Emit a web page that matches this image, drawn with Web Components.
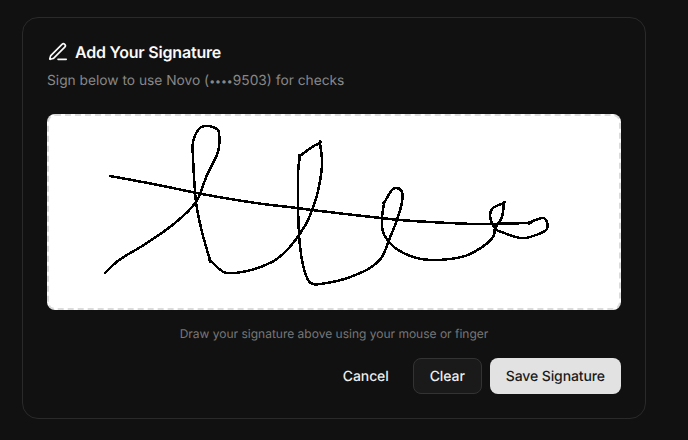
<!DOCTYPE html>
<html>
<head>
<meta charset="utf-8">
<style>
  html, body { margin: 0; padding: 0; background: #111; }
  .dots { font-size: 10.5px; }
</style>
</head>
<body>
<signature-dialog>
  <span slot="title">Add Your Signature</span>
  <span slot="subtitle">Sign below to use Novo (<span class="dots">••••</span>9503) for checks</span>
  <signature-pad></signature-pad>
  <span slot="hint">Draw your signature above using your mouse or finger</span>
  <app-button slot="actions" variant="ghost">Cancel</app-button>
  <app-button slot="actions" variant="outline">Clear</app-button>
  <app-button slot="actions" variant="primary">Save Signature</app-button>
</signature-dialog>
<script>
class AppButton extends HTMLElement {
  constructor() {
    super();
    this.attachShadow({ mode: "open" });
    this.shadowRoot.innerHTML = `
      <style>
        :host { display: inline-flex; }
        button {
          height: 36px;
          padding: 0 16px;
          box-sizing: border-box;
          border-radius: 8px;
          border: 0;
          background: transparent;
          color: #ededed;
          font: 500 14px "Inter", sans-serif;
          letter-spacing: -0.1px;
          text-rendering: geometricPrecision;
          cursor: pointer;
        }
        :host([variant="outline"]) button { background: #1a1a1a; border: 1px solid #333; }
        :host([variant="primary"]) button { background: #e2e2e2; color: #1a1a1a; }
      </style>
      <button><slot></slot></button>`;
  }
}

// a point listed twice stays a sharp corner
const SIGN_POINTS = [
  [105,273],[112,266],[122,258],[147,243],[175,223],[196,202],[207,175],[218,152],[219,133],[215,128],[205,126],[198,130],[193,142],[193,158],[196,202],
  [202,232],[210,260],[210,260],[218,268],[227,273],[247,271],[272,262],[287,250],[299,235],[308,220],[317,195],[322,165],[320,143],[320,143],[312,147],[300,156],[300,156],[298,175],[299,235],
  [303,265],[308,280],[313,284],[320,284],[337,281],[353,276],[370,268],[382,257],[389,240],[397,220],[402,202],[402,192],[397,188],[392,190],[384,203],[384,203],[382,218],[383,232],[389,242],
  [398,250],[413,257],[430,260],[450,259],[468,255],[485,245],[493,237],[496,227],[502,217],[504,203],[504,203],[493,208],[490,215],[492,223],[496,230],[496,230],
  [520,238],[533,236],[546,230],[547,222],[542,218],[528,223],[528,223],[477,224],[430,222],[400,220],[363,216],[320,211],[297,208],[263,204],[230,199],[197,193],[153,184],[110,176]
];

// catmull-rom through the points, so the stroke doesn't look like a polygon
function smoothPath(pts) {
  let d = `M${pts[0][0]} ${pts[0][1]}`;
  for (let i = 0; i < pts.length - 1; i += 1) {
    const p0 = pts[i - 1] || pts[i];
    const p1 = pts[i];
    const p2 = pts[i + 1];
    const p3 = pts[i + 2] || p2;
    const c1x = p1[0] + (p2[0] - p0[0]) / 6;
    const c1y = p1[1] + (p2[1] - p0[1]) / 6;
    const c2x = p2[0] - (p3[0] - p1[0]) / 6;
    const c2y = p2[1] - (p3[1] - p1[1]) / 6;
    d += ` C${c1x.toFixed(1)} ${c1y.toFixed(1)} ${c2x.toFixed(1)} ${c2y.toFixed(1)} ${p2[0]} ${p2[1]}`;
  }
  return d;
}

class SignaturePad extends HTMLElement {
  constructor() {
    super();
    this.attachShadow({ mode: "open" });
    // points were taken in page coordinates, the pad starts at 47,114
    const d = smoothPath(SIGN_POINTS.map((p) => [p[0] - 47, p[1] - 114]));
    this.shadowRoot.innerHTML = `
      <style>
        :host { display: block; }
        .pad {
          position: relative;
          height: 196px;
          box-sizing: border-box;
          background: #fff;
          border-radius: 8px;
          border: 2px dashed #dcdcdc;
          overflow: hidden;
        }
        svg { position: absolute; left: -2px; top: -2px; width: 574px; height: 196px; shape-rendering: crispEdges; }
        path { fill: none; stroke: #000; stroke-width: 2.5; stroke-linejoin: round; stroke-linecap: round; }
      </style>
      <div class="pad">
        <svg viewBox="0 0 574 196"><path d="${d}"/></svg>
      </div>`;
  }
}

class SignatureDialog extends HTMLElement {
  constructor() {
    super();
    this.attachShadow({ mode: "open" });
    this.shadowRoot.innerHTML = `
      <style>
        :host {
          display: block;
          padding: 17px 42px 21px 22px;
          font-family: "Inter", sans-serif;
          text-rendering: geometricPrecision;
        }
        .card {
          height: 402px;
          box-sizing: border-box;
          padding: 24px;
          border: 1px solid #2a2a2a;
          border-radius: 16px;
          background: #111;
          display: flex;
          flex-direction: column;
        }
        h2 {
          margin: 0;
          display: flex;
          align-items: center;
          gap: 8px;
          height: 20px;
          font-size: 16px;
          font-weight: 600;
          letter-spacing: -0.2px;
          color: #fafafa;
          line-height: 20px;
        }
        h2 svg { width: 22px; height: 22px; flex: none; margin: -1px -1.5px -1px -0.5px; }
        .sub {
          margin: 9px 0 0;
          font-size: 13.75px;
          line-height: 20px;
          color: #888;
        }
        .body { margin-top: 22px; }
        .hint {
          margin: 16px 0 0;
          text-align: center;
          font-size: 12px;
          line-height: 16px;
          color: #777;
        }
        .actions {
          margin-top: 16px;
          display: flex;
          justify-content: flex-end;
          gap: 8px;
        }
      </style>
      <div class="card">
        <h2>
          <svg viewBox="0 0 24 24" fill="none" stroke="#fafafa" stroke-width="1.8" stroke-linecap="round" stroke-linejoin="round">
            <path d="M12 20h9"/>
            <path d="M16.376 3.622a1 1 0 0 1 3.002 3.002L7.368 18.635a2 2 0 0 1-.855.506l-2.872.838a.5.5 0 0 1-.62-.62l.838-2.872a2 2 0 0 1 .506-.854z"/>
          </svg>
          <slot name="title"></slot>
        </h2>
        <p class="sub"><slot name="subtitle"></slot></p>
        <div class="body"><slot></slot></div>
        <p class="hint"><slot name="hint"></slot></p>
        <div class="actions"><slot name="actions"></slot></div>
      </div>`;
  }
}

customElements.define("app-button", AppButton);
customElements.define("signature-pad", SignaturePad);
customElements.define("signature-dialog", SignatureDialog);
</script>
</body>
</html>
